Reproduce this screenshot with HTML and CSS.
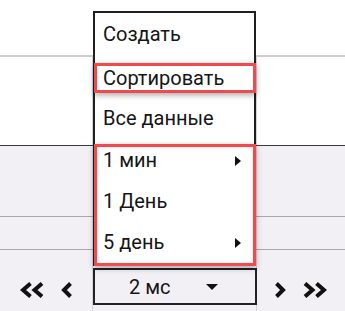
FILE: index.html
```html
<!DOCTYPE html>
<html>
<head>
<meta charset="utf-8">
<link rel="stylesheet" href="styles.css">
</head>
<body>
<div class="page">
  <div class="row r1"><div class="c c1"></div><div class="c c2 plain"></div><div class="c c3"></div></div>
  <div class="row r2"><div class="c c1"></div><div class="c c2"></div><div class="c c3"></div></div>
  <div class="row r3"><div class="c c1"></div><div class="c c2"></div><div class="c c3"></div></div>
  <div class="row r4"><div class="c c1"></div><div class="c c2"></div><div class="c c3"></div></div>
  <div class="row r5">
    <div class="c c1 navl">
      <svg class="dbl" width="24" height="16" viewBox="0 0 24 16"><polyline points="10.5,1.5 3,8 10.5,14.5" /><polyline points="22,1.5 14.5,8 22,14.5" /></svg>
      <svg class="sgl" width="12" height="16" viewBox="0 0 12 16"><polyline points="9.5,1.5 3,8 9.5,14.5" /></svg>
    </div>
    <div class="c c2">
      <div class="select"><span class="sval">2 мс</span><span class="caret"></span></div>
    </div>
    <div class="c c3 navr">
      <svg class="sgl" width="12" height="16" viewBox="0 0 12 16"><polyline points="2.5,1.5 9,8 2.5,14.5" /></svg>
      <svg class="dbl" width="24" height="16" viewBox="0 0 24 16"><polyline points="2,1.5 9.5,8 2,14.5" /><polyline points="13.5,1.5 21,8 13.5,14.5" /></svg>
    </div>
  </div>

  <div class="menu">
    <div class="item first">Создать</div>
    <div class="hl"><div class="hltext">Сортировать</div></div>
    <div class="item third">Все данные</div>
    <div class="group">
      <div class="gitem top"><span>1 мин</span><span class="tri"></span></div>
      <div class="gitem"><span>1 День</span></div>
      <div class="gitem"><span>5 день</span><span class="tri"></span></div>
    </div>
  </div>
</div>
</body>
</html>
```

FILE: styles.css
```css
* { box-sizing: border-box; }
html, body { margin: 0; padding: 0; }
body {
  font-family: Roboto, "Liberation Sans", sans-serif;
  color: #151515;
}
.page {
  position: relative;
  width: 345px;
  height: 311px;
  overflow: hidden;
  background: #f3f0f5;
}
.row {
  display: grid;
  grid-template-columns: 92px 165px 1fr;
}
.c2 {
  border-left: 1px solid #d6d2da;
  border-right: 1px solid #d6d2da;
}
.c2.plain { border-color: transparent; }
.r1 {
  height: 57px;
  background: #fff;
  border-bottom: 2px solid #cdcdcd;
}
.r2 {
  height: 89px;
  background: #fff;
  border-bottom: 1px solid #3a3a3a;
}
.r3 {
  height: 71px;
  border-bottom: 1px solid #a8a8a8;
}
.r4 {
  height: 33px;
  border-bottom: 1px solid #a8a8a8;
}
.r5 {
  height: 61px;
}
.navl, .navr {
  display: flex;
  align-items: flex-start;
  padding-top: 32px;
}
.navl { padding-left: 20px; gap: 17px; }
.navr { padding-left: 17px; gap: 17px; }
svg polyline {
  fill: none;
  stroke: #111;
  stroke-width: 4;
  stroke-linejoin: miter;
  stroke-linecap: butt;
}
.r5 .c2 { padding-top: 18px; }
.select {
  height: 37px;
  margin-right: -1px;
  border: 2px solid #222;
  display: flex;
  align-items: center;
  padding-left: 34px;
  font-size: 20px;
}
.sval { line-height: 1; padding-top: 1px; }
.caret {
  margin-left: 35px;
  width: 0;
  height: 0;
  border-left: 6px solid transparent;
  border-right: 6px solid transparent;
  border-top: 6px solid #111;
}

/* dropdown menu overlay */
.menu {
  position: absolute;
  left: 93px;
  top: 11px;
  width: 163px;
  border: 2px solid #1f1f1f;
  border-bottom: none;
  background: #fff;
  font-size: 20px;
}
.item {
  padding-left: 8px;
  white-space: nowrap;
}
.item.first { height: 42px; line-height: 42px; }
.item.third { height: 45px; line-height: 39px; }
.hl {
  height: 30px;
  margin: 8px -2px 6px -1px;
  border: 3px solid #ef4a4e;
  box-shadow: 0 2px 6px rgba(0, 0, 0, 0.35);
  padding-left: 6px;
}
.hltext { line-height: 24px; }
.group {
  height: 122px;
  margin: 0 -2px 0 -1px;
  border: 3px solid #ef4a4e;
  box-shadow: 0 2px 6px rgba(0, 0, 0, 0.3), inset 0 0 4px rgba(0, 0, 0, 0.12);
  background: #fff;
  overflow: hidden;
}
.gitem {
  height: 41px;
  line-height: 41px;
  padding-left: 6px;
  padding-right: 12px;
  display: flex;
  justify-content: space-between;
  align-items: center;
}
.gitem.top { margin-top: -7px; }
.tri {
  width: 0;
  height: 0;
  border-left: 6px solid #111;
  border-top: 5px solid transparent;
  border-bottom: 5px solid transparent;
}
```
